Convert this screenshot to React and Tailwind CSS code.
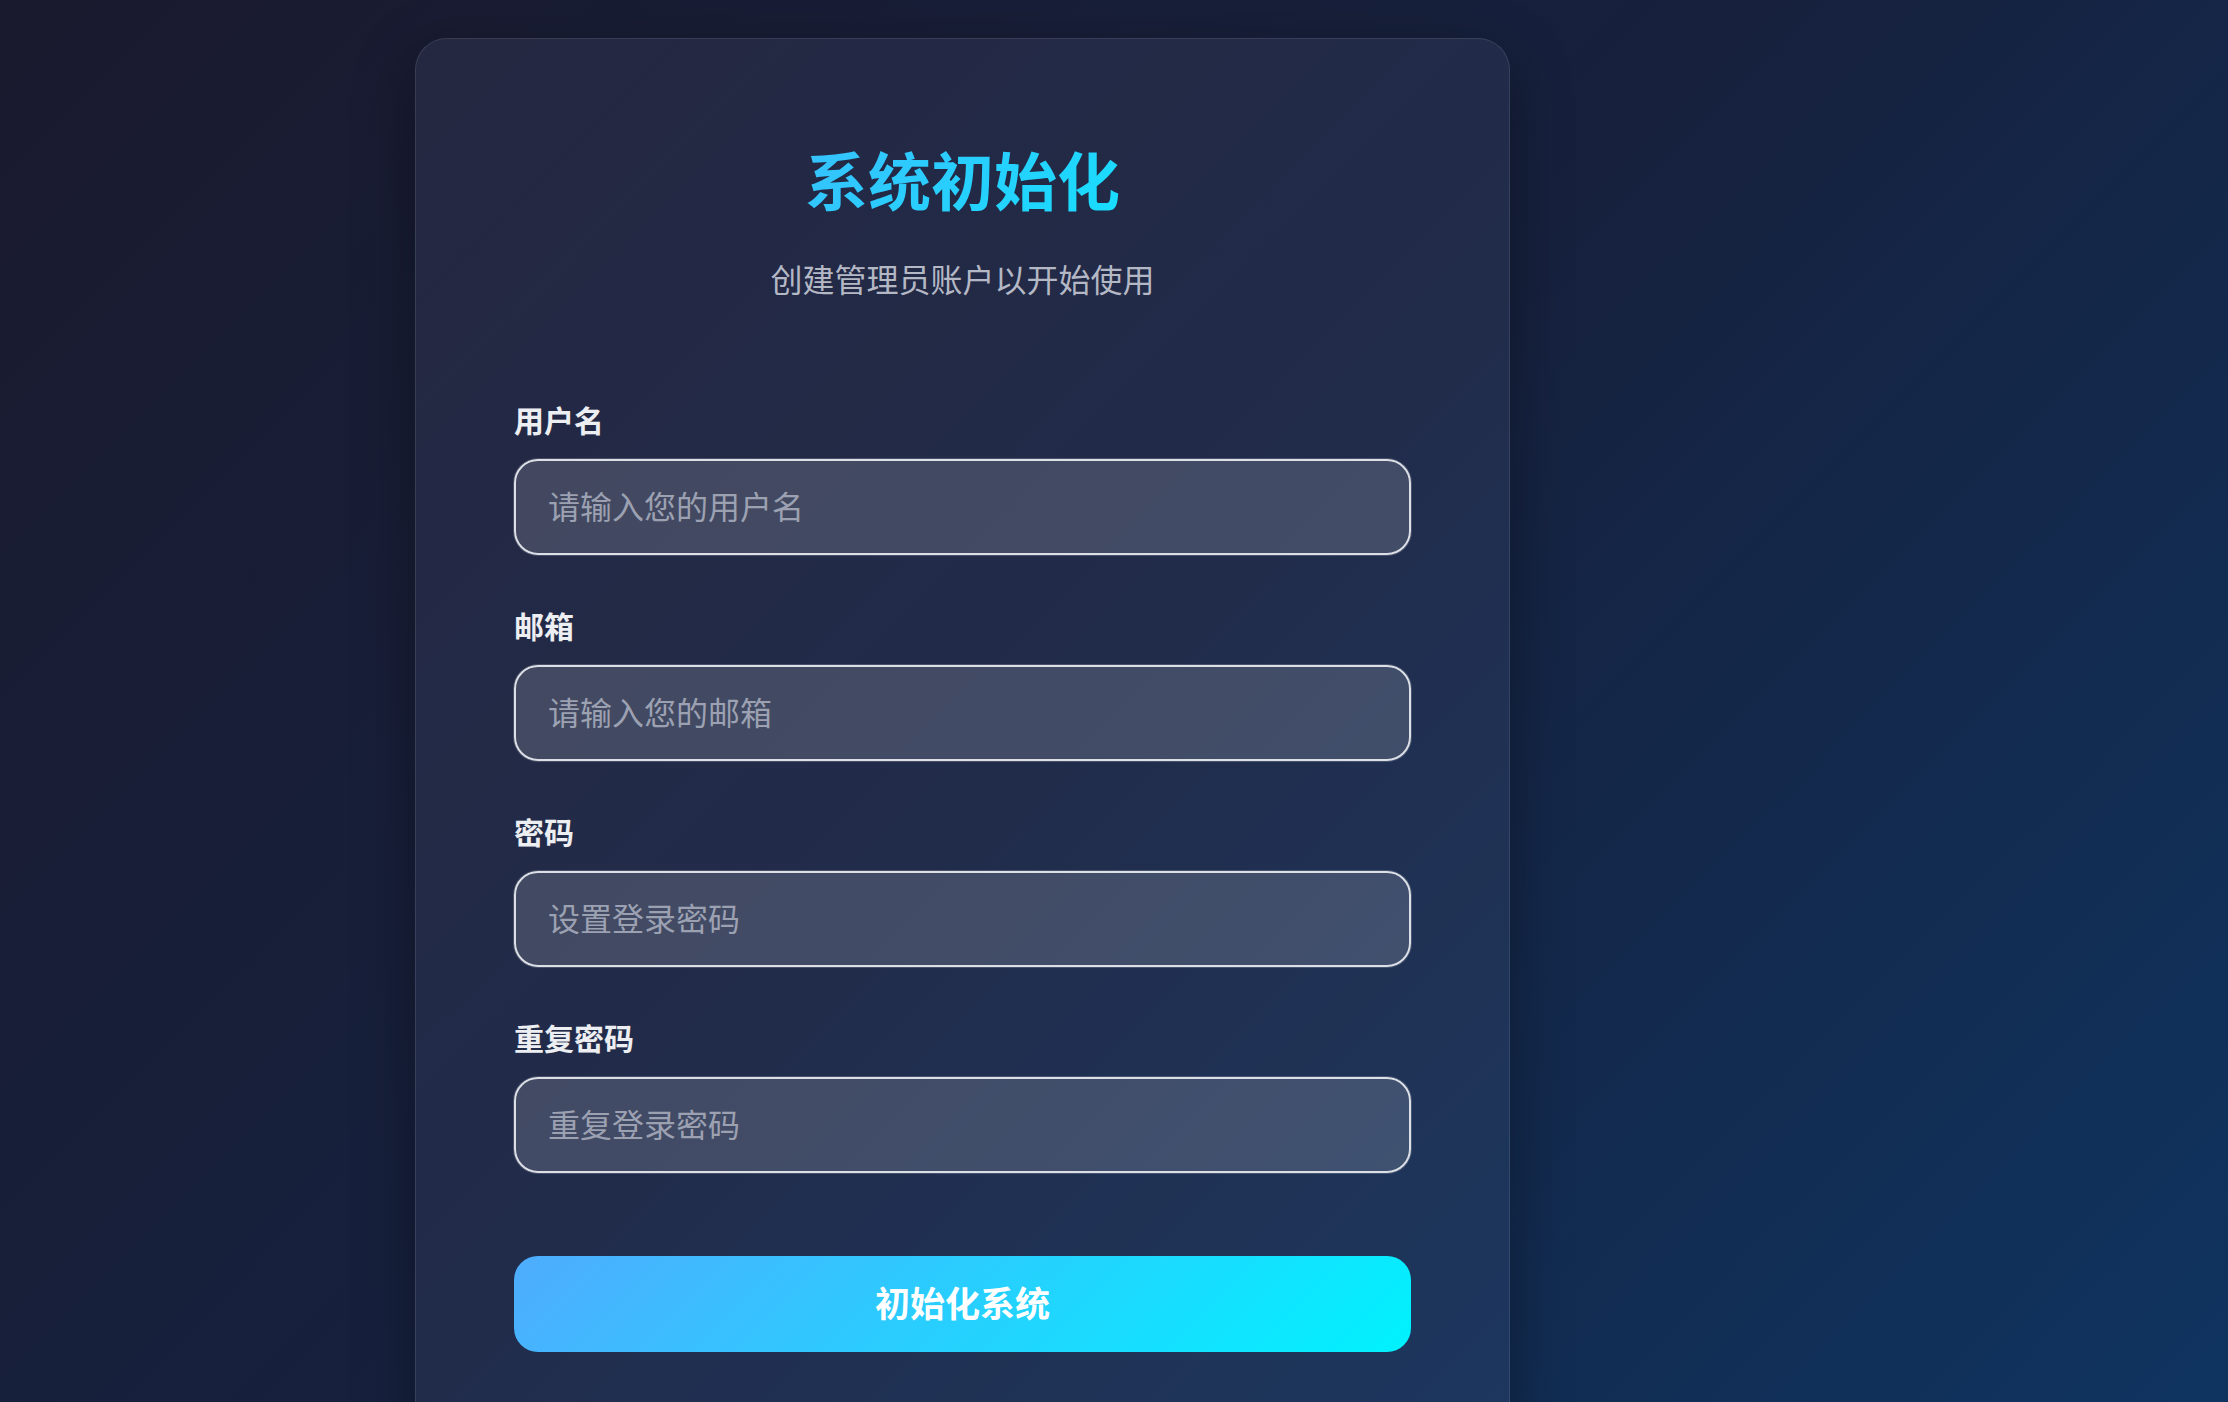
import { useState } from 'react';

const fields = [
  { name: 'username', label: '用户名', type: 'text', placeholder: '请输入您的用户名' },
  { name: 'email', label: '邮箱', type: 'email', placeholder: '请输入您的邮箱' },
  { name: 'password', label: '密码', type: 'password', placeholder: '设置登录密码' },
  { name: 'confirm', label: '重复密码', type: 'password', placeholder: '重复登录密码' },
];

function Setup() {
  const [form, setForm] = useState({ username: '', email: '', password: '', confirm: '' });

  const onChange = e => setForm({ ...form, [e.target.name]: e.target.value });

  return (
    <div className="h-screen overflow-hidden bg-[linear-gradient(135deg,#1a1a2e_0%,#16213e_50%,#0f3460_100%)] pt-[38px] pl-[415px] font-['Noto_Sans_CJK_SC','Noto_Sans',sans-serif]">
      <div className="w-[1095px] rounded-[32px] border border-white/10 bg-[rgba(180,200,255,0.07)] px-[98px] pt-[102px] pb-[98px] shadow-[0_20px_60px_rgba(0,0,0,0.35)]">
        <h1 className="bg-[linear-gradient(135deg,#4facfe,#00f2fe)] bg-clip-text text-center text-[63px] font-bold leading-[74px] text-transparent">
          系统初始化
        </h1>
        <p className="mt-[39px] text-center text-[32px] leading-[48px] text-[#b4b8c5]">
          创建管理员账户以开始使用
        </p>

        <form className="mt-[95px] flex flex-col" onSubmit={e => e.preventDefault()}>
          <div className="flex flex-col gap-[48px]">
            {fields.map(f => (
              <div key={f.name} className="flex flex-col gap-[18px]">
                <label className="text-[30px] font-bold leading-[44px] text-[#eceef2]">{f.label}</label>
                <input
                  name={f.name}
                  type={f.type}
                  value={form[f.name]}
                  onChange={onChange}
                  placeholder={f.placeholder}
                  className="h-[96px] w-full rounded-[24px] border-2 border-[#dcdfe6] bg-white/15 px-[32px] pb-[4px] text-[32px] text-white shadow-[0_0_0_1px_rgba(255,255,255,0.18)] outline-none placeholder:text-[#9ca1b2]"
                />
              </div>
            ))}
          </div>
          <button
            type="submit"
            className="mt-[83px] h-[96px] w-full rounded-[24px] bg-[linear-gradient(135deg,#4facfe,#00f2fe)] pb-[4px] text-[35px] font-bold text-white"
          >
            初始化系统
          </button>
        </form>
      </div>
    </div>
  );
}

export default function App() {
  return <Setup />;
}
